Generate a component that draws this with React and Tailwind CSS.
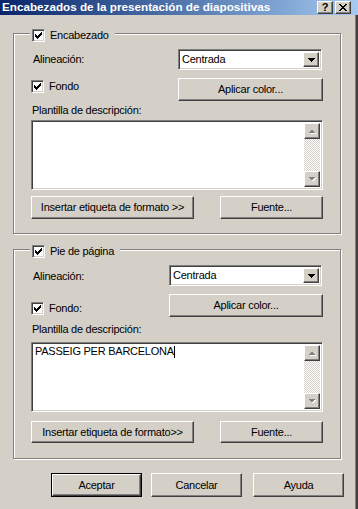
import React from "react";

const raised =
  "border border-t-white border-l-white border-r-[#404040] border-b-[#404040] shadow-[inset_-1px_-1px_#808080] bg-[#d4d0c8]";
const sunken =
  "border border-t-[#808080] border-l-[#808080] border-r-white border-b-white shadow-[inset_1px_1px_#404040,inset_-1px_-1px_#d4d0c8]";

function Check() {
  const cols = [2, 3, 4, 3, 2, 1, 0];
  return (
    <svg width="7" height="7" viewBox="0 0 7 7" shapeRendering="crispEdges">
      {cols.map((r, i) => (
        <rect key={i} x={i} y={r} width="1" height="3" fill="#000" />
      ))}
    </svg>
  );
}

function CheckBox() {
  return (
    <div className={`w-[13px] h-[13px] bg-white flex items-center justify-center shrink-0 ${sunken}`}>
      <Check />
    </div>
  );
}

function Button({ className = "", children }) {
  return (
    <div className={`flex items-center justify-center ${raised} ${className}`}>{children}</div>
  );
}

function Select({ className = "" }) {
  return (
    <div className={`bg-white flex items-stretch p-[2px] ${sunken} ${className}`}>
      <div className="flex-1 flex items-center pl-[1px] leading-none">Centrada</div>
      <div className={`w-[16px] flex items-center justify-center ${raised}`}>
        <svg width="7" height="4" viewBox="0 0 7 4" shapeRendering="crispEdges">
          <polygon points="0,0 7,0 3.5,4" fill="#000" />
        </svg>
      </div>
    </div>
  );
}

function ArrowBtn({ up }) {
  return (
    <div className={`w-[16px] h-[16px] flex items-center justify-center ${raised}`}>
      <svg width="8" height="5" viewBox="0 0 8 5" shapeRendering="crispEdges">
        {up ? (
          <>
            <polygon points="1.5,5 8,5 4.75,1.5" fill="#fff" />
            <polygon points="0.5,4 7,4 3.75,0.5" fill="#808080" />
          </>
        ) : (
          <>
            <polygon points="1.5,1 8,1 4.75,4.5" fill="#fff" />
            <polygon points="0.5,0 7,0 3.75,3.5" fill="#808080" />
          </>
        )}
      </svg>
    </div>
  );
}

function TextArea({ text }) {
  return (
    <div className={`w-[292px] h-[70px] bg-white p-[2px] flex ${sunken}`}>
      <div className="flex-1 pl-[1px] pt-[0px] leading-[13px] flex items-start">
        {text && (
          <>
            <span>{text}</span>
            <span className="inline-block w-[1px] h-[12px] bg-black mt-[1px]" />
          </>
        )}
      </div>
      <div className="w-[16px] flex flex-col">
        <ArrowBtn up />
        <div className="flex-1 bg-[repeating-conic-gradient(#d4d0c8_0_25%,#ffffff_0_50%)] bg-[length:2px_2px]" />
        <ArrowBtn />
      </div>
    </div>
  );
}

function Legend({ label }) {
  return (
    <div className="absolute left-[16px] -top-[5px] h-[13px] flex items-center gap-[5px] bg-[#d4d0c8] pl-[2px] pr-[6px]">
      <CheckBox />
      <span className="leading-none">{label}</span>
    </div>
  );
}

export default function App() {
  return (
    <div className="w-[358px] h-[509px] overflow-hidden bg-[#d4d0c8] flex flex-col text-[11px] tracking-[-0.25px] text-black font-['Liberation_Sans',Arial,sans-serif]">
      {/* Title bar */}
      <div className="h-[15px] shrink-0 flex items-start bg-linear-to-r from-[#0a246a] to-[#a6caf0]">
        <div className="pl-[2px] pt-[0px] font-bold text-white text-[11.7px] tracking-normal leading-[14px] whitespace-nowrap">
          Encabezados de la presentación de diapositivas
        </div>
        <div className="ml-auto mr-[7px] mt-[1px] flex gap-[2px]">
          <div className={`w-[16px] h-[13px] flex items-center justify-center font-bold text-[11px] leading-none ${raised}`}>
            ?
          </div>
          <div className={`w-[16px] h-[13px] flex items-center justify-center ${raised}`}>
            <svg width="8" height="7" viewBox="0 0 8 7" shapeRendering="crispEdges">
              <path d="M0 0h2l2 2.5 2-2.5h2l-3 3.5 3 3.5h-2l-2-2.5-2 2.5h-2l3-3.5z" fill="#000" />
            </svg>
          </div>
        </div>
      </div>

      <div className="flex-1 flex">
        <div className="w-[353px] pl-[13px] pt-[18px] flex flex-col">
          {/* Group 1 */}
          <div className="relative w-[328px] h-[201px] border border-[#808080] shadow-[inset_1px_1px_#fff,1px_1px_#fff]">
            <Legend label="Encabezado" />
            <div className="pl-[17px] pt-[15px] flex flex-col">
              <div className="flex items-center h-[21px]">
                <div className="w-[147px] pl-[2px]">Alineación:</div>
                <Select className="w-[144px] h-[21px]" />
              </div>
              <div className="flex items-start mt-[8px] h-[23px]">
                <div className="w-[147px] flex items-center gap-[5px] mt-[2px]">
                  <CheckBox />
                  <span className="leading-none">Fondo</span>
                </div>
                <Button className="w-[145px] h-[23px]">Aplicar color...</Button>
              </div>
              <div className="mt-[3px] h-[13px] leading-[13px] pl-[1px]">Plantilla de descripción:</div>
              <div className="mt-[3px]">
                <TextArea />
              </div>
              <div className="mt-[6px] flex">
                <Button className="w-[163px] h-[23px]">Insertar etiqueta de formato &gt;&gt;</Button>
                <Button className="ml-[26px] w-[103px] h-[23px]">Fuente...</Button>
              </div>
            </div>
          </div>

          {/* Group 2 */}
          <div className="relative mt-[15px] w-[328px] h-[210px] border border-[#808080] shadow-[inset_1px_1px_#fff,1px_1px_#fff]">
            <Legend label="Pie de página" />
            <div className="pl-[17px] pt-[15px] flex flex-col">
              <div className="flex items-center h-[21px]">
                <div className="w-[138px] pl-[2px] pt-[2px]">Alineación:</div>
                <Select className="w-[153px] h-[21px]" />
              </div>
              <div className="flex items-start mt-[8px] h-[23px]">
                <div className="w-[138px] flex items-center gap-[5px] mt-[8px]">
                  <CheckBox />
                  <span className="leading-none">Fondo:</span>
                </div>
                <Button className="w-[154px] h-[23px]">Aplicar color...</Button>
              </div>
              <div className="mt-[6px] h-[13px] leading-[13px] pl-[1px]">Plantilla de descripción:</div>
              <div className="mt-[6px]">
                <TextArea text="PASSEIG PER BARCELONA" />
              </div>
              <div className="mt-[9px] flex">
                <Button className="w-[163px] h-[22px]">Insertar etiqueta de formato&gt;&gt;</Button>
                <Button className="ml-[26px] w-[103px] h-[22px]">Fuente...</Button>
              </div>
            </div>
          </div>

          {/* Bottom buttons */}
          <div className="mt-[14px] pl-[38px] flex">
            <div className="w-[91px] h-[24px] border border-black flex">
              <Button className="flex-1">Aceptar</Button>
            </div>
            <Button className="ml-[9px] w-[91px] h-[24px]">Cancelar</Button>
            <Button className="ml-[11px] w-[91px] h-[24px]">Ayuda</Button>
          </div>
        </div>
        <div className="w-[5px] flex">
          <div className="w-[2px] bg-[#d4d0c8]" />
          <div className="w-[1px] bg-[#808080]" />
          <div className="w-[2px] bg-[#404040]" />
        </div>
      </div>
    </div>
  );
}
